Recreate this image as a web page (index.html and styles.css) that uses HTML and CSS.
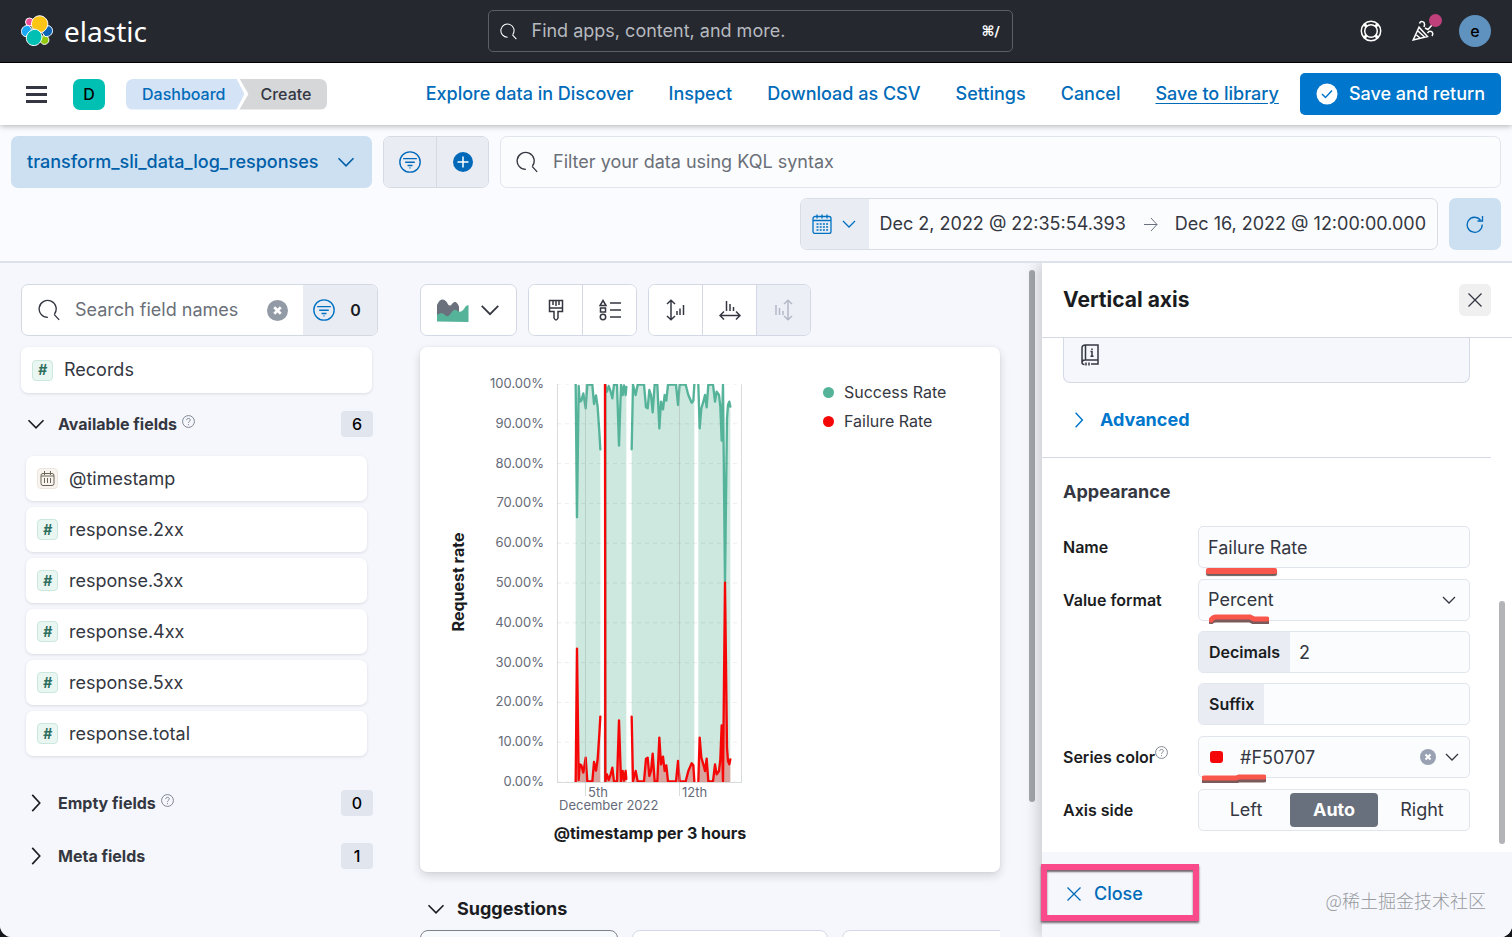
FILE: index.html
```html
<!DOCTYPE html>
<html lang="en">
<head>
    <meta charset="UTF-8" />
    <meta name="viewport" content="width=device-width, initial-scale=1" />
    <title>Create - Elastic</title>
    <link rel="stylesheet" href="styles.css">
</head>
<body>
    <svg class="sprite" aria-hidden="true">
        <symbol id="i-search" viewBox="0 0 16 16"><path d="M7.2 13.4A6.2 6.2 0 1 1 12 10.9M11.7 11.2 15.4 15.2" /></symbol>
        <symbol id="i-down" viewBox="0 0 16 16"><path d="M2 5l6 6 6-6" stroke-width="1.300" /></symbol>
        <symbol id="i-right" viewBox="0 0 16 16"><path d="M5 1.5 11 8l-6 6.500" stroke-width="1.300" /></symbol>
        <symbol id="i-filter" viewBox="0 0 16 16"><circle cx="8" cy="8" r="7.400" /><path d="M3 5.500h10M4.500 8.200h7M6.200 10.500h3.600M7.600 12.300h.8" /></symbol>
        <symbol id="i-cross" viewBox="0 0 16 16"><path d="M1.500 1.500l13 13M14.500 1.500l-13 13" stroke-width="1.300" /></symbol>
        <symbol id="i-clear" viewBox="0 0 16 16"><circle cx="8" cy="8" r="8" fill="currentColor" stroke="none" /><path d="M5.500 5.500l5 5M10.500 5.500l-5 5" stroke="#fff" stroke-width="2" /></symbol>
        <symbol id="i-help" viewBox="0 0 16 16"><circle cx="8" cy="8" r="7.300" /><path d="M5.800 6.300c0-3 4.400-2.800 4.400-.2C10.200 7.800 8 7.800 8 9.700M8 11.200v1.300" /></symbol>
    </svg>

    <div class="app">
        <header class="topbar">
            <a class="logo" href="#">
                <svg width="32" height="32" viewBox="0 0 32 32" stroke="#fff" stroke-width="1">
                    <circle cx="8.500" cy="7" r="4" fill="#f04e98" />
                    <circle cx="23.500" cy="25" r="4.400" fill="#93c90e" />
                    <path d="M8 10.500C3 10 .5 13 .5 16.500S3 22 6 21.500L12 16z" fill="#1ba9f5" />
                    <path d="M24 21.500c5 .5 7.500-2.500 7.500-5.800S29 10.500 26 10.500L20 16z" fill="#0b64b4" />
                    <path d="M11.500 13.500C9 9 11 1.500 18 .8c6-.3 10 5.200 8.500 10.200-1 3.500-4 6-6.500 6.500z" fill="#fec514" />
                    <path d="M5.500 21c1-4 5-6.500 8.500-6.800 4 .3 7.500 4.300 6.800 9-1 5-4.800 7.800-8.800 7.300-4.500-.5-7.500-4.500-6.500-9.500z" fill="#00bfb3" />
                </svg>
                <span class="logo-text">elastic</span>
            </a>
            <label class="global-search">
                <svg class="icon" width="17" height="17"><use href="#i-search" /></svg>
                <input type="search" placeholder="Find apps, content, and more." aria-label="Find apps, content, and more">
                <kbd>⌘/</kbd>
            </label>
            <div class="top-actions">
                <button class="plain" aria-label="Help">
                    <svg class="icon" width="22" height="22" viewBox="0 0 22 22" stroke-width="1.500"><circle cx="11" cy="11" r="9.700" /><circle cx="11" cy="11" r="6.300" /><path d="M4.300 4.300l2.400 2.400M17.700 4.300l-2.400 2.400M4.300 17.700l2.400-2.400M17.700 17.700l-2.400-2.400" stroke-width="3" /></svg>
                </button>
                <button class="plain news" aria-label="News">
                    <svg class="icon" width="22" height="22" viewBox="0 0 22 22" stroke-width="1.500"><path d="M7 7.200 1.200 20l14.300-3.500zM6 11l7 6.500M4.500 15l4 3.500M7.500 3.500c1-3 5.500-2.500 5 1.500L12 7M13 8l3 1.500L20 5M15.500 13c2.500-3.500 7-1 4.500 3" /></svg>
                    <span class="dot"></span>
                </button>
                <button class="avatar">e</button>
            </div>
        </header>

        <nav class="navbar">
            <button class="plain menu" aria-label="Menu"><span></span><span></span><span></span></button>
            <button class="space">D</button>
            <div class="crumbs">
                <a class="crumb" href="#">Dashboard</a>
                <span class="crumb current">Create</span>
            </div>
            <div class="nav-links">
                <a href="#">Explore data in Discover</a>
                <a href="#">Inspect</a>
                <a href="#">Download as CSV</a>
                <a href="#">Settings</a>
                <a href="#">Cancel</a>
                <a class="underlined" href="#">Save to library</a>
            </div>
            <button class="save">
                <svg width="22" height="22" viewBox="0 0 22 22"><circle cx="11" cy="11" r="10.500" fill="#fff" /><path d="M6 11l3.500 3.500 6.500-7" fill="none" stroke="#07c" stroke-width="1.500" /></svg>
                Save and return
            </button>
        </nav>

        <section class="query">
            <div class="query-row">
                <button class="dataview">transform_sli_data_log_responses <svg class="icon" width="20" height="20"><use href="#i-down" /></svg></button>
                <div class="filter-group">
                    <button aria-label="Saved queries"><svg class="icon" width="22" height="22"><use href="#i-filter" /></svg></button>
                    <button aria-label="Add filter"><svg width="20" height="20" viewBox="0 0 20 20"><circle cx="10" cy="10" r="10" fill="#0068b8" /><path d="M10 4.500v11M4.500 10h11" stroke="#fff" stroke-width="1.500" /></svg></button>
                </div>
                <label class="kql">
                    <svg class="icon" width="22" height="22"><use href="#i-search" /></svg>
                    <input type="text" placeholder="Filter your data using KQL syntax" aria-label="KQL filter">
                </label>
            </div>
            <div class="query-row right">
                <div class="dates">
                    <button class="calendar" aria-label="Quick select">
                        <svg class="icon" width="20" height="20" viewBox="0 0 20 20" stroke-width="1.300"><rect x="1" y="2.500" width="18" height="17" rx="2" /><path d="M1 6.500h18M5 .5v4M10 .5v4M15 .5v4" /><path d="M4.500 10h12M4.500 13h12M4.500 16h12" stroke-width="1.600" stroke-dasharray="2 1.200" /></svg>
                        <svg class="icon" width="16" height="16"><use href="#i-down" /></svg>
                    </button>
                    <button class="date">Dec 2, 2022 @ 22:35:54.393</button>
                    <svg class="icon arrow" width="15" height="15" viewBox="0 0 15 15"><path d="M1 7.500h13M8 1l6 6.500L8 14" /></svg>
                    <button class="date">Dec 16, 2022 @ 12:00:00.000</button>
                </div>
                <button class="refresh" aria-label="Refresh"><svg class="icon" width="18" height="18" viewBox="0 0 18 18" stroke-width="1.300"><path d="M16.200 9.500A7.500 7.500 0 1 1 14.500 5M16.500 1v5h-5" /></svg></button>
            </div>
        </section>

        <main class="workspace">
            <aside class="fields">
                <div class="field-search">
                    <label>
                        <svg class="icon" width="22" height="22"><use href="#i-search" /></svg>
                        <input type="text" placeholder="Search field names" aria-label="Search field names">
                    </label>
                    <button class="plain clear" aria-label="Clear"><svg class="icon" width="21" height="21"><use href="#i-clear" /></svg></button>
                    <button class="type-filter"><svg class="icon" width="22" height="22"><use href="#i-filter" /></svg><b>0</b></button>
                </div>
                <div class="field records"><i class="token">#</i>Records</div>
                <div class="group">
                    <svg class="icon" width="20" height="20"><use href="#i-down" /></svg><h3>Available fields</h3><svg class="icon help" width="13" height="13"><use href="#i-help" /></svg><span class="badge">6</span>
                </div>
                <ul class="field-list">
                    <li class="field"><i class="token date-token"><svg class="icon" width="15" height="15" viewBox="0 0 15 15"><rect x="1" y="2.500" width="13" height="12" rx="2" /><path d="M1 5h13M4.500 0v4M10.500 0v4M4.500 7v5M7.500 7v5M10.500 7v5" /></svg></i>@timestamp</li>
                    <li class="field"><i class="token">#</i>response.2xx</li>
                    <li class="field"><i class="token">#</i>response.3xx</li>
                    <li class="field"><i class="token">#</i>response.4xx</li>
                    <li class="field"><i class="token">#</i>response.5xx</li>
                    <li class="field"><i class="token">#</i>response.total</li>
                </ul>
                <div class="group closed">
                    <svg class="icon" width="20" height="20"><use href="#i-right" /></svg><h3>Empty fields</h3><svg class="icon help" width="13" height="13"><use href="#i-help" /></svg><span class="badge">0</span>
                </div>
                <div class="group closed">
                    <svg class="icon" width="20" height="20"><use href="#i-right" /></svg><h3>Meta fields</h3><span class="badge">1</span>
                </div>
            </aside>

            <section class="center">
                <div class="toolbar">
                    <button class="chart-type" aria-label="Chart type">
                        <svg width="32" height="23" viewBox="0 0 32 23"><path d="M0 22V6C3-1 7-1 10 3.500c1.500 3.500 3 4 5 1.500 3-3.500 5-2 7 2.500V22z" fill="#6a717d" /><path d="M0 22.500V16c3-2.500 6-2.500 8.500.5 2 2 4 0 6-3 2.500-3.500 4-3 6-1.500 4 2 6-1 8-4.500 1-1 2-1.500 3-1.500v17z" fill="#54b399" /></svg>
                        <svg class="icon" width="22" height="22"><use href="#i-down" /></svg>
                    </button>
                    <div class="tools">
                        <button aria-label="Visual options"><svg class="icon" width="22" height="22" viewBox="0 0 22 22" stroke-width="1.500"><path d="M4.500 1.500h13v11h-4.500V19q-2 4-4 0v-6.500H4.500zM4.500 9h13M8 1.500V6M11 1.500V7M14 1.500V6" /></svg></button>
                        <button aria-label="Legend"><svg class="icon" width="22" height="22" viewBox="0 0 22 22" stroke-width="1.500"><path d="M4 1.500l3 5H1zM1.500 9h5v4h-5zM11 4h11M11 11h11M11 18h11" /><circle cx="4" cy="18" r="2.700" /></svg></button>
                    </div>
                    <div class="tools">
                        <button aria-label="Left axis"><svg class="icon" width="22" height="22" viewBox="0 0 22 22" stroke-width="1.500"><path d="M6 1.500v19M2 5l4-3.700L10 5M2 17l4 3.700L10 17M12 16v-4M15 16V9.500M18.500 16V6" /></svg></button>
                        <button aria-label="Bottom axis"><svg class="icon" width="22" height="22" viewBox="0 0 22 22" stroke-width="1.500"><path d="M1.500 16.500h19M5 12.500l-4 4 4 4M17 12.500l4 4-4 4M7.500 12V2M11 12V5M14.500 12V8" /></svg></button>
                        <button disabled aria-label="Right axis"><svg class="icon" width="22" height="22" viewBox="0 0 22 22" stroke-width="1.500"><path d="M15 1.500v19M11 5l4-3.700L19 5M11 17l4 3.700L19 17M3 16V6M6.500 16V9M10 16v-4" /></svg></button>
                    </div>
                </div>

                <div class="chart-card">
                    <svg class="chart" width="330" height="500" viewBox="0 0 330 500">
                        <text class="axis-title" transform="translate(25 224) rotate(-90)">Request rate</text>
                        <g id="ticks"></g>
                        <svg id="plot" x="118" y="26" width="184" height="398" viewBox="0 0 552 1194"></svg>
                        <path class="grid" d="M118.500 26v398M302.500 26v398M118 424.500h185M146.500 26v412M240.500 26v412" />
                        <text class="tick" x="149" y="439">5th</text>
                        <text class="tick" x="243" y="439">12th</text>
                        <text class="tick" x="120" y="452">December 2022</text>
                        <text class="axis-title" x="211" y="481">@timestamp per 3 hours</text>
                    </svg>
                    <ul class="legend">
                        <li class="success">Success Rate</li>
                        <li class="failure">Failure Rate</li>
                    </ul>
                </div>

                <div class="suggestions">
                    <svg class="icon" width="20" height="20"><use href="#i-down" /></svg>
                    <h2>Suggestions</h2>
                </div>
                <div class="suggestion-list">
                    <div class="suggestion selected"></div>
                    <div class="suggestion"></div>
                    <div class="suggestion"></div>
                </div>
            </section>
            <div class="scrollbar"></div>

            <aside class="flyout">
                <header>
                    <h2>Vertical axis</h2>
                    <button aria-label="Close panel"><svg class="icon" width="16" height="16"><use href="#i-cross" /></svg></button>
                </header>
                <div class="flyout-body">
                    <div class="flyout-content">
                        <div class="formula-box">
                            <svg class="icon" width="18" height="22" viewBox="0 0 18 22" stroke-width="1.500"><path d="M4.500 1H17v15H4.500V1C2 1 1 2 1 4v14.500c0 1.500 1 2 2.500 2M1 18.500C1 17 2 16 4 16M17 16v4h-7M5 18.500v3M8 18.500v3M9.500 7.500H11V12M9.500 12.300h3M11 4.500V6" /></svg>
                        </div>
                        <button class="plain advanced"><svg class="icon" width="18" height="18"><use href="#i-right" /></svg>Advanced</button>
                        <hr>
                        <h3>Appearance</h3>
                        <form class="form">
                            <div class="row">
                                <label for="name">Name</label>
                                <div class="control"><input id="name" type="text" value="Failure Rate"><span class="mark mark-name"></span></div>
                            </div>
                            <div class="row">
                                <label for="format">Value format</label>
                                <div class="stack">
                                    <div class="control">
                                        <select id="format"><option>Percent</option></select>
                                        <svg class="icon chevron" width="16" height="16"><use href="#i-down" /></svg>
                                        <svg class="mark mark-format" width="60" height="10" viewBox="0 0 60 10"><path d="M2 8q2-2 5-2h34l4 2h13" stroke="#7a5a5a" /><path d="M2 6q2-3 5-3h34l4 2h13" stroke="#f9574c" /></svg>
                                    </div>
                                    <div class="control"><label class="prepend" for="decimals">Decimals</label><input id="decimals" type="text" value="2"></div>
                                    <div class="control"><label class="prepend" for="suffix">Suffix</label><input id="suffix" type="text"></div>
                                </div>
                            </div>
                            <div class="row">
                                <label for="color">Series color<svg class="icon help" width="13" height="13"><use href="#i-help" /></svg></label>
                                <div class="control color">
                                    <span class="swatch"></span>
                                    <input id="color" type="text" value="#F50707">
                                    <button type="button" class="plain clear" aria-label="Clear color"><svg class="icon" width="16" height="16"><use href="#i-clear" /></svg></button>
                                    <svg class="icon open" width="16" height="16"><use href="#i-down" /></svg>
                                    <svg class="mark mark-color" width="64" height="10" viewBox="0 0 64 10"><path d="M2 8h32l3-1h25" stroke="#7a5a5a" /><path d="M2 5h32l3-1h25" stroke="#f9574c" /></svg>
                                </div>
                            </div>
                            <div class="row">
                                <span class="label" id="side-label">Axis side</span>
                                <div class="control sides" role="radiogroup" aria-labelledby="side-label">
                                    <label><input type="radio" name="side">Left</label>
                                    <label><input type="radio" name="side" checked>Auto</label>
                                    <label><input type="radio" name="side">Right</label>
                                </div>
                            </div>
                        </form>
                    </div>
                    <div class="scrollbar"></div>
                </div>
                <footer>
                    <button class="plain close"><svg class="icon" width="16" height="16"><use href="#i-cross" /></svg>Close</button>
                    <span class="highlight"></span>
                    <span class="credit">@稀土掘金技术社区</span>
                </footer>
            </aside>
        </main>
    </div>

    <script>
        (function() {
            const HEIGHT = 1194;
            // failure line, one list per run of buckets: x, y from the top of the plot
            const runs = [
                '56,1194 60,794 65,1188 68,1141 73,1144 79,1166 86,1121 91,1192 106,1192 111,1134 117,1160 122,1125 127,1050 130,998',
                '144,0 145,1192 150,1171 155,1188 161,1171 166,1151 171,1192 180,1192 186,1009 192,1192 197,1161 201,1190 206,1161 208,1185',
                '224,998 228,1192 236,1161 242,1192 261,1192 267,1124 272,1121 277,1176 282,1161 287,1109 293,1192 301,1192 307,1061 312,1141 318,1118 323,1161 328,1144 333,1192 357,1192 363,1131 368,1192 386,1192 394,1161 404,1138 409,1144 412,1192',
                '424,1192 428,1061 433,1121 439,1141 444,1161 449,1124 454,1192 468,1192 474,1141 479,1171 486,1161 490,1126 494,1024 498,1194 504,596 510,1091 513,1131 517,1141 520,1126'
            ].map(run => run.split(' ').map(p => p.split(',').map(Number)));

            function series(name, points) {
                const line = 'M' + points.map(p => p.join(' ')).join('L');
                const area = line + 'L' + points[points.length - 1][0] + ' ' + HEIGHT + 'L' + points[0][0] + ' ' + HEIGHT + 'Z';
                return '<path class="area ' + name + '" d="' + area + '"/><path class="line ' + name + '" d="' + line + '"/>';
            }

            let ticks = '';
            let grid = '';
            for (let i = 0; i <= 10; i++) {
                const y = 26 + i * 39.8;
                ticks += '<text class="tick" text-anchor="end" x="105" y="' + (y + 4) + '">' + (100 - i * 10) + '.00%</text>';
                grid += '<path class="dash" d="M0 ' + i * 119.4 + 'H552"/>';
            }
            document.getElementById('ticks').innerHTML = ticks;

            const success = runs.map(run => series('success', run.map(p => [p[0], HEIGHT - p[1]]))).join('');
            const failure = runs.map(run => series('failure', run)).join('');
            document.getElementById('plot').innerHTML = success + failure + grid;
        })();
    </script>
</body>
</html>
```
FILE: styles.css
```css
* {
    box-sizing: border-box;
}
body {
    margin: 0;
    background-color: #17181c;
    color: #343741;
    font-family: Inter, "Noto Sans CJK SC", sans-serif;
    font-size: 18px;
    line-height: 24px;
}
h2, h3, ul {
    margin: 0;
    padding: 0;
}
ul {
    list-style: none;
}
a {
    color: #006bb8;
    text-decoration: none;
}
button, input, select {
    font: inherit;
    color: inherit;
    margin: 0;
}
button {
    border: none;
    padding: 0;
    display: flex;
    align-items: center;
    justify-content: center;
    cursor: pointer;
}
input, select {
    background: none;
    border: none;
    outline: none;
    padding: 0;
    min-width: 0;
    flex: 1;
}
input::placeholder {
    color: #6a6f78;
    opacity: 1;
}
.sprite {
    display: none;
}
.icon {
    fill: none;
    stroke: currentColor;
    flex: none;
}
.plain {
    background: none;
}
.app {
    display: flex;
    flex-direction: column;
    height: 100vh;
    overflow: hidden;
    background-color: #f9fbff;
    border-radius: 0 0 12px 12px;
}

/* top bar */
.topbar {
    display: grid;
    grid-template-columns: 1fr 525px 1fr;
    align-items: center;
    height: 63px;
    flex: none;
    padding: 0 21px;
    background-color: #25282f;
    border-bottom: 1px solid #000;
    color: #fff;
}
.logo {
    display: flex;
    align-items: center;
    gap: 11px;
    color: #fff;
}
.logo-text {
    font-family: "Noto Sans", sans-serif;
    font-size: 28px;
    line-height: 32px;
}
.global-search {
    display: flex;
    align-items: center;
    height: 42px;
    margin-left: -6px;
    margin-right: 6px;
    padding: 0 12px 0 11px;
    gap: 15px;
    border: 1px solid #5b5f68;
    border-radius: 5px;
}
.global-search input::placeholder {
    color: #b6b9bf;
}
.global-search kbd {
    font-family: "DejaVu Sans", sans-serif;
    font-size: 14px;
    font-weight: bold;
}
.top-actions {
    display: flex;
    justify-content: flex-end;
    align-items: center;
    gap: 30px;
}
.top-actions .plain {
    color: #fff;
}
.news {
    position: relative;
}
.dot {
    position: absolute;
    top: -6px;
    right: -8px;
    width: 13px;
    height: 13px;
    border-radius: 50%;
    background-color: #c0407c;
}
.avatar {
    width: 32px;
    height: 32px;
    margin-left: -5px;
    border-radius: 50%;
    background-color: #6092c0;
    color: #000;
    font-size: 16px;
    font-weight: 500;
}

/* navigation */
.navbar {
    position: relative;
    display: flex;
    align-items: center;
    height: 62px;
    flex: none;
    padding: 0 11px 0 26px;
    background-color: #fff;
    box-shadow: 0 1px 6px rgba(0, 0, 0, 0.3);
}
.menu {
    flex-direction: column;
    gap: 4px;
    margin-right: 26px;
}
.menu span {
    width: 21px;
    height: 3px;
    background-color: #343741;
}
.space {
    width: 32px;
    height: 31px;
    margin-right: 21px;
    border-radius: 7px;
    background-color: #00bfb3;
    color: #000;
    font-size: 16px;
    font-weight: 500;
}
.crumbs {
    display: flex;
    font-size: 16px;
    font-weight: 500;
}
.crumb {
    height: 31px;
    line-height: 31px;
    padding: 0 19px 0 16px;
    border-radius: 7px 0 0 7px;
    background-color: #d4e3f6;
    clip-path: polygon(0 0, calc(100% - 8px) 0, 100% 50%, calc(100% - 8px) 100%, 0 100%);
}
.crumb.current {
    margin-left: -5px;
    padding: 0 16px 0 21px;
    border-radius: 0 7px 7px 0;
    background-color: #d6d7d9;
    clip-path: polygon(0 0, 100% 0, 100% 100%, 0 100%, 9px 50%);
}
.nav-links {
    display: flex;
    gap: 35px;
    margin-left: auto;
    font-weight: 500;
}
.underlined {
    text-decoration: underline;
    text-underline-offset: 3px;
}
.save {
    height: 42px;
    margin-left: 21px;
    padding: 0 16px;
    gap: 11px;
    border-radius: 5px;
    background-color: #07c;
    color: #fff;
    font-weight: 500;
}

/* query bar */
.query {
    display: flex;
    flex-direction: column;
    gap: 10px;
    height: 138px;
    flex: none;
    padding: 11px 11px 0;
    border-bottom: 2px solid #dde1e9;
}
.query-row {
    display: flex;
    gap: 11px;
}
.query-row.right {
    justify-content: flex-end;
}
.dataview {
    justify-content: space-between;
    min-width: 361px;
    height: 52px;
    padding: 0 16px;
    border-radius: 7px;
    background-color: #cce0f1;
    color: #005fa8;
    font-weight: 500;
}
.filter-group {
    display: flex;
    border: 1px solid #d5dae3;
    border-radius: 7px;
    overflow: hidden;
}
.filter-group button {
    width: 52px;
    background-color: #e9edf3;
    color: #0068b8;
}
.filter-group button + button {
    border-left: 1px solid #d5dae3;
}
.kql {
    display: flex;
    flex: 1;
    align-items: center;
    gap: 15px;
    padding: 0 15px;
    border: 1px solid #e1e5ec;
    border-radius: 7px;
    background-color: #fbfcfd;
}
.dates {
    display: flex;
    align-items: center;
    height: 52px;
    padding-right: 11px;
    border: 1px solid #d8dce4;
    border-radius: 7px;
    background-color: #fbfcfd;
    overflow: hidden;
}
.calendar {
    align-self: stretch;
    width: 68px;
    gap: 9px;
    margin-right: 11px;
    background-color: #e9edf3;
    color: #0071c2;
}
.date {
    background: none;
}
.arrow {
    margin: 0 17px;
    color: #69707d;
}
.refresh {
    width: 52px;
    height: 52px;
    border-radius: 7px;
    background-color: #cce0f1;
    color: #0068b8;
}

/* workspace */
.workspace {
    display: flex;
    flex: 1;
    min-height: 0;
    background-color: #f5f7fc;
}
.scrollbar {
    width: 6px;
    flex: none;
    border-radius: 3px;
    background-color: #b2b4b8;
}
.workspace > .scrollbar {
    height: 79%;
    margin: 7px 7px 0 0;
    background-color: #a3a6ab;
}

/* field list */
.fields {
    width: 378px;
    flex: none;
    padding: 21px 0 0 21px;
}
.field-search {
    display: flex;
    align-items: center;
    height: 52px;
    border: 1px solid #d3d8e1;
    border-radius: 7px;
    background-color: #fff;
    overflow: hidden;
}
.field-search label {
    display: flex;
    align-items: center;
    flex: 1;
    min-width: 0;
    gap: 15px;
    padding-left: 16px;
}
.clear {
    color: #98a2b3;
}
.field-search .clear {
    margin-right: 15px;
    color: #929aa6;
}
.type-filter {
    align-self: stretch;
    width: 74px;
    padding-right: 6px;
    gap: 15px;
    background-color: #e9edf3;
    color: #0071c2;
}
.type-filter b {
    color: #1a1c21;
    font-size: 16px;
    font-weight: 600;
}
.field {
    display: flex;
    align-items: center;
    gap: 11px;
    height: 45px;
    padding-left: 11px;
    border-radius: 7px;
    background-color: #fff;
    box-shadow: 0 1px 3px rgba(60, 70, 90, 0.15);
}
.records {
    height: 46px;
    margin: 11px 6px 18px 0;
}
.token {
    display: flex;
    align-items: center;
    justify-content: center;
    width: 21px;
    height: 21px;
    border: 1px solid #cbe8de;
    border-radius: 4px;
    background-color: #eaf6f2;
    color: #2f6f5e;
    font-size: 14px;
    font-style: italic;
    font-weight: 700;
}
.date-token {
    border-color: #ece6dc;
    background-color: #f8f5f0;
    color: #6c6454;
}
.group {
    display: flex;
    align-items: center;
    height: 26px;
    margin: 0 5px 0 5px;
    color: #1a1c21;
}
.group h3 {
    margin: 0 5px 0 12px;
    color: #343741;
    font-size: 16px;
    font-weight: 700;
}
.help {
    margin-bottom: 5px;
    color: #69707d;
}
.badge {
    width: 32px;
    margin-left: auto;
    border-radius: 4px;
    background-color: #e0e5ee;
    color: #000;
    font-size: 16px;
    font-weight: 500;
    line-height: 26px;
    text-align: center;
}
.field-list {
    display: flex;
    flex-direction: column;
    gap: 6px;
    margin: 19px 11px 34px 5px;
}
.closed {
    margin-bottom: 27px;
}

/* chart */
.center {
    flex: 1;
    min-width: 0;
    padding: 21px 29px 0 42px;
}
.toolbar {
    display: flex;
    gap: 11px;
}
.tools, .chart-type {
    display: flex;
    height: 52px;
    border: 1px solid #d3d8e4;
    border-radius: 7px;
    background-color: #fff;
    color: #343741;
    overflow: hidden;
}
.tools button {
    width: 54px;
    background-color: #fff;
    color: #343741;
}
.tools button:first-child {
    width: 53px;
}
.tools button + button {
    border-left: 1px solid #d3d8e4;
}
.tools button:disabled {
    background-color: #eceff6;
    color: #b3b9c6;
}
.chart-type {
    width: 97px;
    gap: 10px;
}
.chart-card {
    display: flex;
    height: 525px;
    margin-top: 11px;
    padding: 11px 19px;
    border-radius: 7px;
    background-color: #fff;
    box-shadow: 0 0 2px rgba(0, 0, 0, 0.08), 0 4px 10px rgba(0, 0, 0, 0.14);
}
.tick {
    fill: #646a77;
    font-size: 13px;
}
.axis-title {
    fill: #1a1c21;
    font-size: 16px;
    font-weight: 700;
    text-anchor: middle;
}
.grid {
    fill: none;
    stroke: #a0a8a8;
    stroke-opacity: 0.4;
}
.dash {
    stroke: #000;
    stroke-opacity: 0.07;
    stroke-width: 3;
    stroke-dasharray: 12 12;
}
.area.success {
    fill: #cde8df;
}
.area.failure {
    fill: #f50707;
    fill-opacity: 0.3;
}
.line {
    fill: none;
    stroke-width: 7;
    stroke-linejoin: round;
    stroke-linecap: round;
}
.line.success {
    stroke: #54b399;
}
.line.failure {
    stroke: #f50707;
}
.legend {
    padding: 22px 0 0 54px;
    font-size: 16px;
}
.legend li {
    display: flex;
    align-items: center;
    gap: 10px;
    margin-bottom: 5px;
}
.legend li::before {
    content: "";
    width: 11px;
    height: 11px;
    border-radius: 50%;
    background-color: #54b399;
}
.legend .failure::before {
    background-color: #f50707;
}
.suggestions {
    display: flex;
    align-items: center;
    gap: 11px;
    margin: 25px 0 9px 6px;
    color: #1a1c21;
}
.suggestions h2 {
    font-size: 18px;
    font-weight: 700;
}
.suggestion-list {
    display: grid;
    grid-template-columns: 198px 196px 196px;
    gap: 14px;
    overflow: hidden;
}
.suggestion {
    height: 130px;
    border: 1px solid #d3dae6;
    border-radius: 8px;
    background-color: #fff;
}
.suggestion.selected {
    border-color: #7d828c;
    background-color: #f7fafd;
}

/* flyout */
.flyout {
    display: flex;
    flex-direction: column;
    width: 470px;
    flex: none;
    background-color: #fff;
    box-shadow: -4px 0 14px rgba(0, 0, 0, 0.18);
    clip-path: inset(0 0 0 -30px);
}
.flyout header {
    display: flex;
    align-items: center;
    justify-content: space-between;
    height: 75px;
    flex: none;
    padding: 0 21px;
    border-bottom: 1px solid #d3dae6;
}
.flyout h2 {
    color: #1a1c21;
    font-size: 21px;
    font-weight: 700;
}
.flyout header button {
    width: 32px;
    height: 32px;
    border-radius: 5px;
    background-color: #f0f0f1;
}
.flyout-body {
    display: flex;
    flex: 1;
    min-height: 0;
}
.flyout-content {
    flex: 1;
    min-width: 0;
    padding-left: 21px;
}
.formula-box {
    height: 45px;
    margin-right: 21px;
    padding: 6px 17px;
    border: 1px solid #d3dae6;
    border-top: none;
    border-radius: 0 0 7px 7px;
    background-color: #f5f7fc;
}
.advanced {
    gap: 12px;
    margin: 25px 0 25px 7px;
    color: #07c;
    font-weight: 700;
}
.flyout hr {
    margin: 0 0 22px -21px;
    border: none;
    border-top: 1px solid #d3dae6;
}
.flyout h3 {
    font-size: 18px;
    font-weight: 700;
}
.form {
    display: flex;
    flex-direction: column;
    gap: 11px;
    margin: 22px 21px 0 0;
}
.row {
    display: grid;
    grid-template-columns: 135px minmax(0, 1fr);
}
.row > label, .label {
    color: #1a1c21;
    font-size: 16px;
    font-weight: 600;
    line-height: 42px;
}
.row .help {
    margin-bottom: 4px;
}
.stack {
    display: flex;
    flex-direction: column;
    gap: 10px;
}
.control {
    position: relative;
    display: flex;
    align-items: center;
    height: 42px;
    border: 1px solid #e1e5ec;
    border-radius: 5px;
    background-color: #fbfcfd;
}
.control > input, select {
    height: 40px;
    padding: 0 9px;
    appearance: none;
}
.prepend {
    padding: 0 10px;
    border-radius: 4px 0 0 4px;
    background-color: #e9edf3;
    color: #1a1c21;
    font-size: 16px;
    font-weight: 600;
    line-height: 40px;
}
.chevron {
    position: absolute;
    right: 12px;
    pointer-events: none;
}
.swatch {
    width: 13px;
    height: 12px;
    margin: 0 8px 0 11px;
    border-radius: 3px;
    background-color: #f50707;
}
.open {
    margin: 0 9px 0 8px;
}
.sides {
    padding: 3px;
}
.sides label {
    flex: 1;
    border-radius: 4px;
    line-height: 34px;
    text-align: center;
}
.sides input {
    position: absolute;
    opacity: 0;
}
.sides label:has(:checked) {
    background-color: #69707d;
    color: #fff;
    font-weight: 700;
}
.mark {
    position: absolute;
    fill: none;
    stroke-width: 5;
    stroke-linecap: round;
    pointer-events: none;
}
.mark-name {
    left: 7px;
    top: 41px;
    width: 71px;
    height: 6px;
    border-radius: 2px;
    background-color: #f9574c;
    box-shadow: 0 2px 1px #6d5c5c;
}
.mark-format {
    left: 10px;
    top: 34px;
}
.mark-color {
    left: 3px;
    top: 36px;
}
.flyout-body .scrollbar {
    align-self: flex-end;
    height: 243px;
    margin: 0 7px 8px 8px;
}
.flyout footer {
    position: relative;
    display: flex;
    align-items: center;
    justify-content: space-between;
    height: 85px;
    flex: none;
    padding: 0 26px 2px 24px;
    background-color: #f5f7fc;
}
.close {
    gap: 12px;
    color: #006bb8;
    font-weight: 500;
}
.highlight {
    position: absolute;
    left: -1px;
    top: 12px;
    width: 158px;
    height: 57px;
    border: 6px solid #fb4a8b;
    box-shadow: 0 2px 2px rgba(60, 40, 50, 0.7), inset 0 2px 2px rgba(60, 40, 50, 0.7);
}
.credit {
    margin-top: 13px;
    color: #989a9f;
    font-family: "Noto Sans CJK SC", sans-serif;
    font-weight: 300;
}
```
